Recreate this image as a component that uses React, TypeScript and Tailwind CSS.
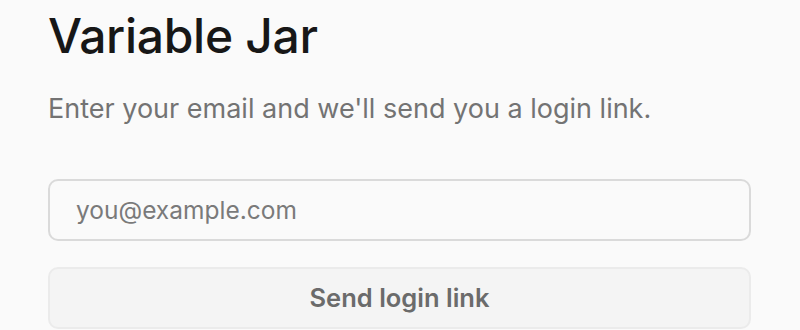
export default function App() {
  return (
    <div className="min-h-[330px] w-full bg-[#fafafa] px-12 pt-[8px] font-['Inter',sans-serif]">
      <h1 className="text-[48px] font-medium leading-[56px] tracking-[-0.3px] text-[#171717]">Variable Jar</h1>
      <p className="mt-[27px] text-[27px] leading-[36px] text-[#737373]">Enter your email and we'll send you a login link.</p>
      <div className="mt-[52px] flex w-[703px] flex-col gap-[26px]">
        <input
          className="h-[62px] w-full rounded-[10px] border-2 border-[#dadada] bg-[#fafafa] px-[26px] text-[24.5px] text-[#171717] outline-none placeholder:text-[#7a7a7a]"
          placeholder="you@example.com"
        />
        <button className="h-[62px] w-full rounded-[10px] border-2 border-[#ebebeb] bg-[#f4f4f4] text-[25.5px] font-semibold text-[#6b6b6b]">
          Send login link
        </button>
      </div>
    </div>
  );
}
